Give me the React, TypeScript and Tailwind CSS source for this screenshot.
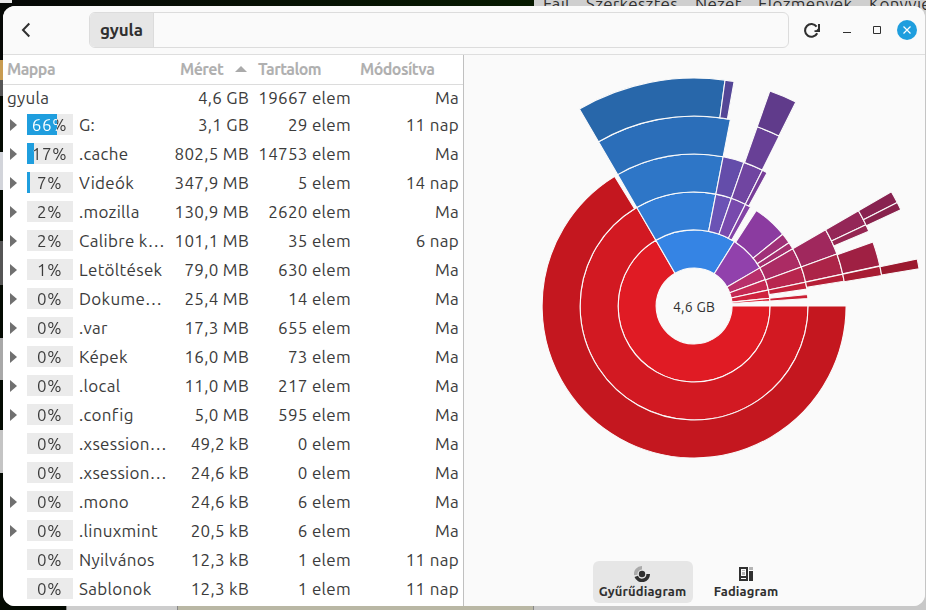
import React from 'react';

interface FolderRow {
  name: string;
  percent: number;
  fill: number;
  size: string;
  contents: string;
  modified: string;
  expandable: boolean;
}

const folders: FolderRow[] = [
  { name: 'G:', percent: 66, fill: 30, size: '3,1 GB', contents: '29 elem', modified: '11 nap', expandable: true },
  { name: '.cache', percent: 17, fill: 7, size: '802,5 MB', contents: '14753 elem', modified: 'Ma', expandable: true },
  { name: 'Videók', percent: 7, fill: 3, size: '347,9 MB', contents: '5 elem', modified: '14 nap', expandable: true },
  { name: '.mozilla', percent: 2, fill: 0, size: '130,9 MB', contents: '2620 elem', modified: 'Ma', expandable: true },
  { name: 'Calibre k…', percent: 2, fill: 0, size: '101,1 MB', contents: '35 elem', modified: '6 nap', expandable: true },
  { name: 'Letöltések', percent: 1, fill: 0, size: '79,0 MB', contents: '630 elem', modified: 'Ma', expandable: true },
  { name: 'Dokume…', percent: 0, fill: 0, size: '25,4 MB', contents: '14 elem', modified: 'Ma', expandable: true },
  { name: '.var', percent: 0, fill: 0, size: '17,3 MB', contents: '655 elem', modified: 'Ma', expandable: true },
  { name: 'Képek', percent: 0, fill: 0, size: '16,0 MB', contents: '73 elem', modified: 'Ma', expandable: true },
  { name: '.local', percent: 0, fill: 0, size: '11,0 MB', contents: '217 elem', modified: 'Ma', expandable: true },
  { name: '.config', percent: 0, fill: 0, size: '5,0 MB', contents: '595 elem', modified: 'Ma', expandable: true },
  { name: '.xsession…', percent: 0, fill: 0, size: '49,2 kB', contents: '0 elem', modified: 'Ma', expandable: false },
  { name: '.xsession…', percent: 0, fill: 0, size: '24,6 kB', contents: '0 elem', modified: 'Ma', expandable: false },
  { name: '.mono', percent: 0, fill: 0, size: '24,6 kB', contents: '6 elem', modified: 'Ma', expandable: true },
  { name: '.linuxmint', percent: 0, fill: 0, size: '20,5 kB', contents: '6 elem', modified: 'Ma', expandable: true },
  { name: 'Nyilvános', percent: 0, fill: 0, size: '12,3 kB', contents: '1 elem', modified: '11 nap', expandable: false },
  { name: 'Sablonok', percent: 0, fill: 0, size: '12,3 kB', contents: '1 elem', modified: '11 nap', expandable: false },
];

// [ring, start angle, end angle, colour], degrees clockwise from the right
const segments: [number, number, number, string][] = [
  [1, 0, 239.8, '#e01b24'],
  [2, 0, 239.8, '#d21922'],
  [3, 0, 238.5, '#c4171f'],
  [1, 239.8, 302, '#3584e4'],
  [2, 239.8, 281, '#327dd5'],
  [3, 239.8, 281, '#2e76c7'],
  [4, 239.8, 281, '#2b6eb9'],
  [5, 239.8, 277.8, '#2867aa'],
  [5, 277.8, 280.1, '#544696'],
  [2, 281, 289.1, '#6b53b5'],
  [3, 281, 289.1, '#644daa'],
  [2, 289.1, 296.8, '#784aad'],
  [3, 289.1, 296.7, '#7045a1'],
  [4, 289.4, 296.6, '#684096'],
  [5, 289.4, 296.5, '#603b8b'],
  [2, 296.8, 299.7, '#8343a6'],
  [3, 296.7, 298.7, '#773d98'],
  [1, 302, 329.9, '#9141ac'],
  [2, 303.1, 321, '#8b3ba0'],
  [2, 321, 326.3, '#a03078'],
  [2, 326.3, 329.9, '#a52e6e'],
  [1, 329.9, 339.7, '#b82f6b'],
  [2, 329.9, 340, '#ab2b64'],
  [3, 329.9, 340, '#a0285d'],
  [4, 329.9, 334.7, '#942657'],
  [4, 334.7, 336.8, '#952652'],
  [5, 329.9, 333, '#882250'],
  [5, 333, 335, '#88224c'],
  [1, 339.7, 347.8, '#c52953'],
  [2, 340, 347.9, '#b8264e'],
  [3, 340, 347.9, '#ac2448'],
  [4, 340.3, 347.8, '#9f2043'],
  [1, 347.8, 354.2, '#cf233e'],
  [2, 347.9, 351.4, '#c2213a'],
  [3, 347.9, 350.6, '#b51e36'],
  [4, 347.9, 350.8, '#a81c33'],
  [5, 348.1, 350.6, '#9b1a2f'],
  [1, 354.2, 356.2, '#d92235'],
  [2, 354.2, 356.2, '#cb2034'],
];

const RING = 38;

function arcPath(ring: number, start: number, end: number) {
  const inner = ring * RING;
  const outer = inner + RING;
  const point = (r: number, deg: number) => {
    const rad = (deg * Math.PI) / 180;
    return `${(r * Math.cos(rad)).toFixed(2)} ${(r * Math.sin(rad)).toFixed(2)}`;
  };
  const large = end - start > 180 ? 1 : 0;
  return `M${point(inner, start)} L${point(outer, start)} A${outer} ${outer} 0 ${large} 1 ${point(outer, end)} L${point(inner, end)} A${inner} ${inner} 0 ${large} 0 ${point(inner, start)}Z`;
}

function RingsChart() {
  return (
    <svg width="461" height="480" viewBox="-230.1 -251 461 480" className="block">
      {segments.map(([ring, start, end, color], i) => (
        <path key={i} d={arcPath(ring, start, end)} fill={color} stroke="#fafafa" strokeWidth="1.1" />
      ))}
      <text x="0" y="6" textAnchor="middle" fontSize="14" fill="#303030">
        4,6 GB
      </text>
    </svg>
  );
}

function PercentBar({ percent, fill }: { percent: number; fill: number }) {
  return (
    <div className="relative h-[21px] w-[46px] bg-[#ebebeb]">
      <div className="absolute inset-y-0 left-0 bg-[#1f9ede]" style={{ width: fill }} />
      {/* text turns white where the bar is filled */}
      <div
        className="relative h-[22px] bg-clip-text pr-px text-center leading-[22px] tracking-[0.6px] text-transparent"
        style={{ backgroundImage: `linear-gradient(to right, #fff ${fill}px, #3b3b3b ${fill}px)` }}
      >
        {percent}%
      </div>
    </div>
  );
}

function Cells({ size, contents, modified }: { size: string; contents: string; modified: string }) {
  return (
    <>
      <div className="w-[76px] text-right">{size}</div>
      <div className="w-[102px] text-right">{contents}</div>
      <div className="w-[108px] text-right">{modified}</div>
    </>
  );
}

function FolderTable() {
  return (
    <div className="flex w-[461px] flex-col border-r border-[#c0c0c0] bg-white">
      <div className="flex h-[30px] shrink-0 items-center border-b border-[#dcdcdc] pb-0.5 pl-1 text-base font-semibold tracking-[-0.55px] text-[#b0b0b0]">
        <div className="w-[173px]">Mappa</div>
        <div className="flex w-[78px] items-center">
          <span className="w-[55px]">Méret</span>
          <svg width="12" height="6" viewBox="0 0 12 6">
            <path d="M0 6 6 0l6 6Z" fill="#aaaaaa" />
          </svg>
        </div>
        <div className="w-[102px]">Tartalom</div>
        <div>Módosítva</div>
      </div>
      <div className="flex h-[25px] shrink-0 items-center pl-1">
        <div className="w-[166px]">gyula</div>
        <Cells size="4,6 GB" contents="19667 elem" modified="Ma" />
      </div>
      {folders.map((folder, i) => (
        <div key={i} className="flex h-[29px] shrink-0 items-center pl-[7px]">
          <div className="w-[17px]">
            {folder.expandable && (
              <svg width="7" height="12" viewBox="0 0 7 12">
                <path d="M0 0 7 6 0 12Z" fill="#707070" />
              </svg>
            )}
          </div>
          <PercentBar percent={folder.percent} fill={folder.fill} />
          <div className="w-[100px] pl-1.5 whitespace-nowrap">{folder.name}</div>
          <Cells size={folder.size} contents={folder.contents} modified={folder.modified} />
        </div>
      ))}
    </div>
  );
}

function HeaderBar() {
  return (
    <header className="flex h-[49px] shrink-0 items-center border-b border-[#dedede] bg-[#fafafa]">
      <div className="flex w-[86px] pl-[18px]">
        <svg width="10" height="16" viewBox="0 0 10 16" fill="none" stroke="#303030" strokeWidth="2">
          <path d="M8.3 1.5 2 8l6.3 6.5" />
        </svg>
      </div>
      <div className="flex h-9 w-[700px] overflow-hidden rounded-md border border-[#dcdcdc]">
        <div className="flex w-16 items-center justify-center border-r border-[#dcdcdc] bg-[#e6e6e6] text-[17px] font-bold tracking-[-0.1px] text-[#303030]">
          gyula
        </div>
      </div>
      <svg width="18" height="18" viewBox="0 0 18 18" className="ml-[14px]" fill="none">
        <path d="M14.2 12.2A6.4 6.4 0 1 1 13.6 5.6" stroke="#303030" strokeWidth="2.1" />
        <path d="M11.5 11V9.2h1.8L15 7.4V3h2v8Z" fill="#303030" />
      </svg>
      <svg width="8" height="12" viewBox="0 0 8 12" className="ml-[22px]">
        <path d="M0 8h8v1H0z" fill="#303030" />
      </svg>
      <svg width="8" height="8" viewBox="0 0 8 8" className="ml-[22px]">
        <path d="M.5.5h7v7h-7z" fill="none" stroke="#303030" />
      </svg>
      <div className="ml-4 flex h-5 w-5 items-center justify-center rounded-full bg-[#1f9ede]">
        <svg width="8" height="8" viewBox="0 0 8 8" stroke="#ffffff" strokeWidth="1.2">
          <path d="m.5.5 7 7m0-7-7 7" />
        </svg>
      </div>
    </header>
  );
}

function ViewSwitcher() {
  return (
    <div className="flex gap-[3px] pl-[129px] text-[13px] font-bold text-[#303030]">
      <button className="flex h-[42px] w-[100px] flex-col items-center rounded-md bg-[#e6e6e6] pt-[5px]">
        <svg width="16" height="16" viewBox="0 0 16 16" fill="none" className="mr-0.5">
          <path d="M1.8 9A6.2 6.2 0 0 1 8 1.8" stroke="#aaaaaa" strokeWidth="3.6" />
          <path d="M2.2 10.4A6.2 6.2 0 0 0 14.2 8" stroke="#303030" strokeWidth="3.6" />
          <circle cx="8" cy="8" r="3.2" fill="#303030" />
        </svg>
        <span className="mr-px leading-[18px] tracking-[0.15px]">Gyűrűdiagram</span>
      </button>
      <button className="flex h-[42px] w-[100px] flex-col items-center pt-[5px]">
        <svg width="16" height="16" viewBox="0 0 16 16">
          <path d="M1 1h9v14H1zM3 3v7h5V3zM3 12v1h5v-1z" fill="#303030" fillRule="evenodd" />
          <path d="M4 4h3v1H4zM4 6h3v3H4zM11 1h4v3h-4z" fill="#b4b4b4" />
          <path d="M11 5h4v10h-4z" fill="#303030" />
        </svg>
        <span className="leading-[18px] tracking-[0.1px]">Fadiagram</span>
      </button>
    </div>
  );
}

function Backdrop() {
  return (
    <div className="absolute inset-0 flex flex-col justify-between bg-[#040a02]">
      <div className="flex h-20">
        <div className="w-[534px] bg-linear-to-r from-[#060806] to-[#071a00]">
          <div className="h-[3px] w-3 bg-[#e8e8e8]" />
          <div className="mt-[57px] h-5 w-[3px] bg-[#c89b50]" />
        </div>
        <div className="flex flex-1 gap-[18px] overflow-hidden bg-[#cfcfcf] pl-[9px] text-[17px] leading-4 whitespace-nowrap text-[#303030]">
          <span className="-mt-1 w-[25px] shrink-0">Fájl</span>
          <span className="-mt-1 w-[91px] shrink-0">Szerkesztés</span>
          <span className="-mt-1 w-[45px] shrink-0">Nézet</span>
          <span className="-mt-1 w-[93px] shrink-0">Előzmények</span>
          <span className="-mt-1 shrink-0">Könyvjelzők</span>
        </div>
      </div>
      <div className="flex flex-1 justify-between">
        <div className="w-[3px]">
          <div className="h-4 bg-[#555555]" />
          <div className="mt-14 h-[38px] bg-[#d2d4da]" />
          <div className="mt-[51px] h-11 bg-[#555555]" />
          <div className="mt-[53px] h-[42px] bg-[#a8a8a8]" />
          <div className="mt-[50px] h-[43px] bg-[#c4c4c4]" />
        </div>
        <div className="w-5 bg-[#c4c4c4]" />
      </div>
      <div className="flex h-5">
        <div className="w-[66px]" />
        <div className="w-[111px] border-l border-[#888888] bg-[#cdcdcd]" />
        <div className="w-[357px] border-x border-[#888888] bg-[#b9b7a4]" />
        <div className="flex-1 bg-[#c8c8c8]" />
      </div>
    </div>
  );
}

export default function App() {
  return (
    <div className="relative h-[610px] w-[926px] overflow-hidden pt-1.5 pl-[3px] font-['Ubuntu','Noto_Sans',sans-serif] text-[17px] tracking-[0.3px] text-[#3b3b3b]">
      <Backdrop />
      <div className="relative flex h-[600px] w-[922px] flex-col overflow-hidden rounded-xl bg-[#fafafa]">
        <HeaderBar />
        <div className="flex min-h-0 flex-1">
          <FolderTable />
          <div className="flex flex-1 flex-col bg-[#fafafa]">
            <RingsChart />
            <div className="mt-[26px]">
              <ViewSwitcher />
            </div>
          </div>
        </div>
      </div>
    </div>
  );
}
